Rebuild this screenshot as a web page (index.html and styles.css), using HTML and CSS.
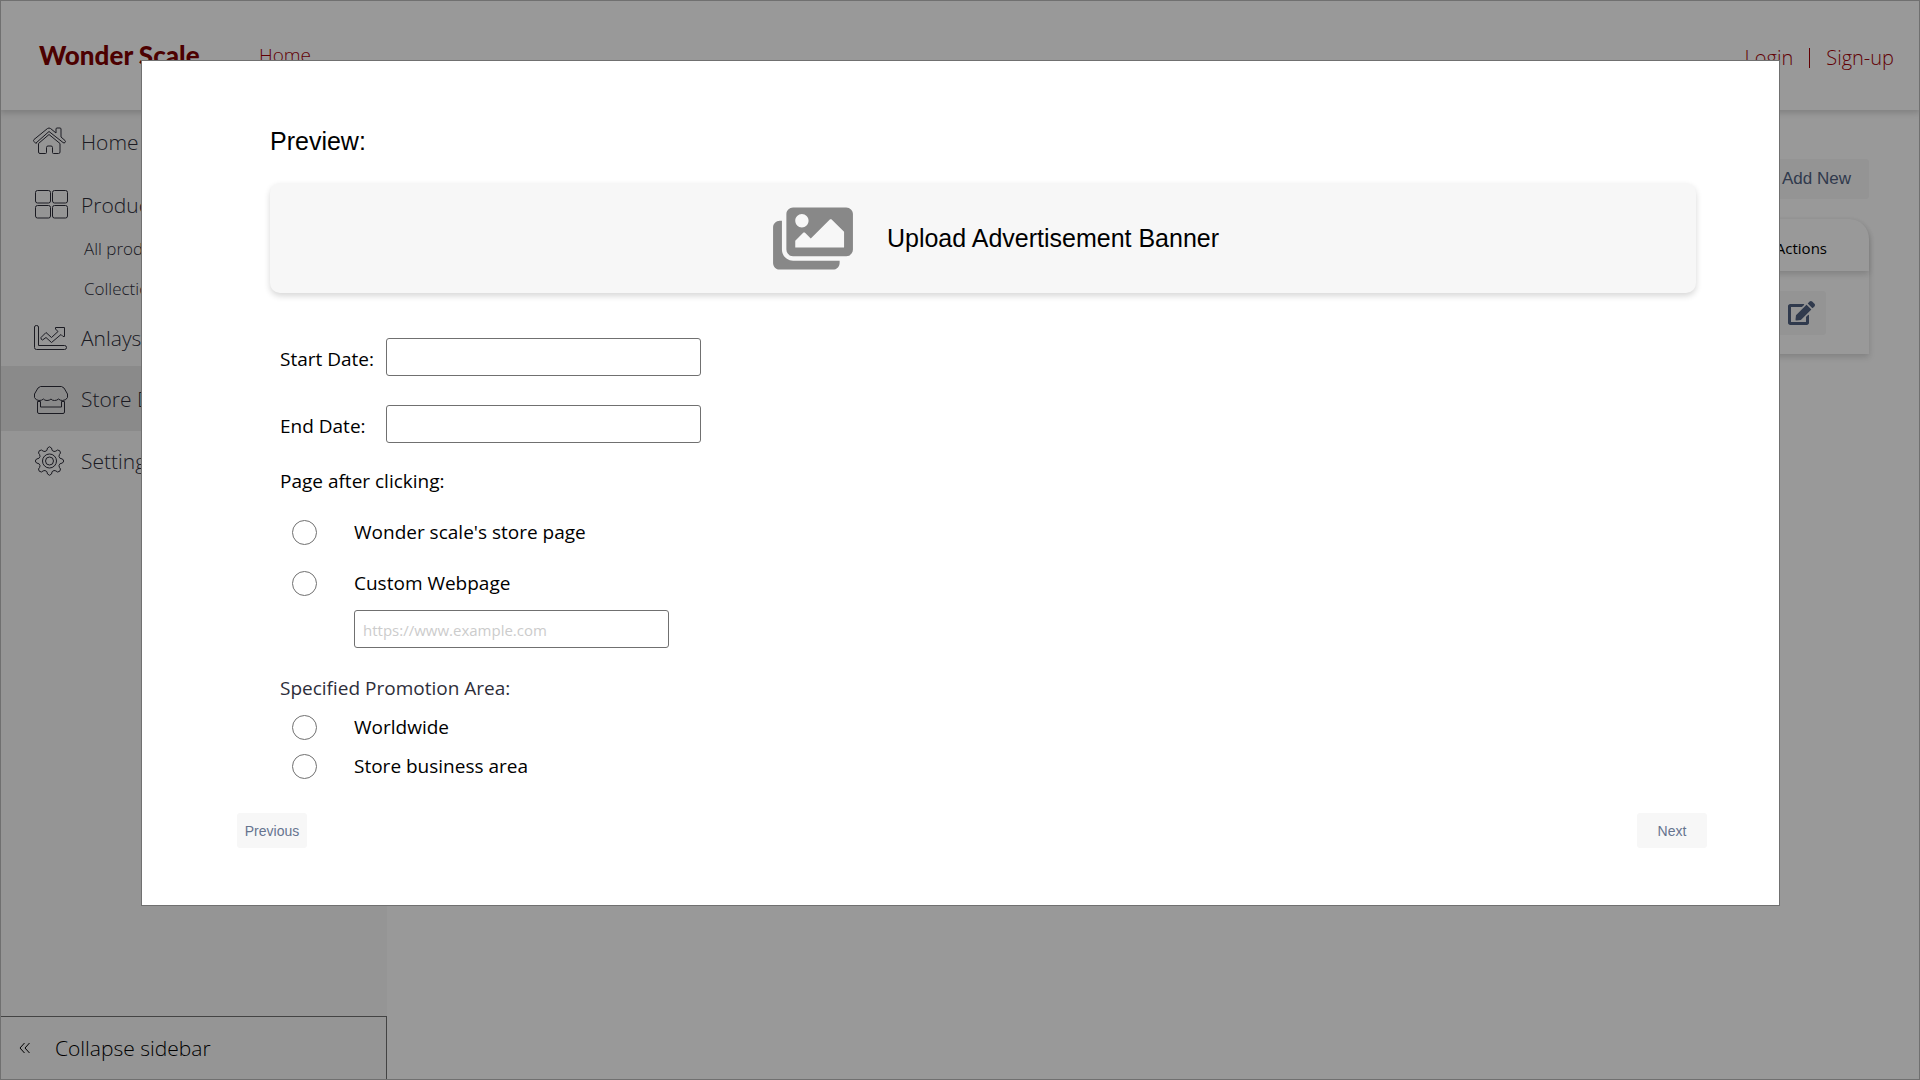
FILE: index.html
```html
<!DOCTYPE html>
<html lang="en">
<head>
<meta charset="utf-8">
<title>Wonder Scale</title>
<link rel="stylesheet" href="styles.css">
</head>
<body>
<div class="page">
  <header class="topbar">
    <a class="brand" href="#">Wonder Scale</a>
    <a class="toplink" href="#">Home</a>
    <div class="account">
      <a class="toplink" href="#">Login</a>
      <span class="divider"></span>
      <a class="toplink" href="#">Sign-up</a>
    </div>
  </header>
  <div class="body">
    <aside class="sidebar">
      <nav class="nav">
        <a class="navlink" href="#">
          <svg class="navicon" viewBox="0 0 36 32"><path d="M4 17.500L2 15.500Q1 14.500 2 13.500L15.500 2.500Q17 1.500 18.500 2.500L24 7V3Q24 2 25 2H28Q29 2 29 3V11L33 14.500Q34 15.500 33 16.500Q32 17.500 31 16.500L17 5.500L4 17Z M6.500 17.500L17 8.500L28 17.500V26Q28 27.500 26.500 27.500H21.500Q20.500 27.500 20.500 26.500V21.500Q20.500 20 19 20H16Q14.500 20 14.500 21.500V26.500Q14.500 27.500 13.500 27.500H8Q6.500 27.500 6.500 26Z"/></svg>
          <span>Home</span></a>
        <a class="navlink navlink-parent" href="#">
          <svg class="navicon" viewBox="0 0 36 32"><rect x="3.500" y="1.500" width="15" height="12.500" rx="2"/><rect x="20.500" y="1.500" width="15" height="12.500" rx="2"/><rect x="3.500" y="16.500" width="15" height="12.500" rx="2"/><rect x="20.500" y="16.500" width="15" height="12.500" rx="2"/></svg>
          <span>Products</span></a>
        <a class="sublink" href="#">All products</a>
        <a class="sublink" href="#">Collections</a>
        <a class="navlink" href="#">
          <svg class="navicon" viewBox="0 0 36 32"><path d="M2.500 5Q2.500 3.500 4.500 3.500T6.500 5V23.500H32.500Q34.500 23.500 34.500 25.500T32.500 27.500H4.500Q2.500 27.500 2.500 25.500Z M9 15.500L14 10.500L19.500 15.500L26 9.500L23.500 7V5.500H32.500V14.500H31L29 12.500L19.500 20.500L14 15.500L10.500 18Q8.500 17.500 9 15.500Z"/></svg>
          <span>Anlaysis</span></a>
        <a class="navlink navlink-current" href="#">
          <svg class="navicon" viewBox="0 0 36 32"><path d="M8.500 3.500H29.500L32 5L35.500 11V14.500Q34 17.500 30.500 17.500Q28 17.500 26.500 16Q25 17.500 22.500 17.500Q20 17.500 19 16Q17.500 17.500 15 17.500Q12.500 17.500 11.500 16Q10 17.500 7 17.500Q4 17.500 2.500 14.500V11L6 5Z M5.500 18.500H8.500V24H29.500V18.500H32.500V29Q32.500 30.500 31 30.500H7Q5.500 30.500 5.500 29Z"/></svg>
          <span>Store Display</span></a>
        <a class="navlink" href="#">
          <svg class="navicon" viewBox="0 0 36 32"><path stroke-linejoin="round" d="M15.500 3Q17.500 0.500 19.500 3Q19.500 6 22 6.500Q24 6.500 25.500 5Q28.500 5 28.500 8Q27 9.500 27 11.500Q27.500 14 30.500 14Q33 16 30.500 18Q27.500 18 27 20.500Q27 22.500 28.500 24Q28.500 27 25.500 27Q24 25.500 22 25.500Q19.500 26 19.500 29Q17.500 31.500 15.500 29Q15.500 26 13 25.500Q11 25.500 9.500 27Q6.500 27 6.500 24Q8 22.500 8 20.500Q7.500 18 4.500 18Q2 16 4.500 14Q7.500 14 8 11.500Q8 9.500 6.500 8Q6.500 5 9.500 5Q11 6.500 13 6.500Q15.500 6 15.500 3Z"/><circle cx="17.500" cy="16" r="7"/><circle cx="17.500" cy="16" r="4"/></svg>
          <span>Settings</span></a>
      </nav>
      <button class="collapse" type="button">
        <svg class="chevrons" viewBox="0 0 12 12"><path d="M5.500 1L1 6L5.500 11M10.500 1L6 6L10.500 11"/></svg>
        <span>Collapse sidebar</span>
      </button>
    </aside>
    <main class="main">
      <button class="btn btn-add" type="button">Add New</button>
      <table class="list">
        <thead><tr><th>Actions</th></tr></thead>
        <tbody><tr><td>
          <button class="btn btn-edit" type="button" aria-label="Edit"><svg viewBox="0 0 576 512"><path d="M402.600 83.200l90.200 90.200c3.800 3.800 3.800 10 0 13.800L274.400 405.600l-92.800 10.300c-12.400 1.400-22.900-9.100-21.500-21.500l10.300-92.800L388.800 83.200c3.800-3.800 10-3.800 13.800 0zm162-22.900l-48.800-48.800c-15.200-15.200-39.900-15.200-55.200 0l-35.400 35.400c-3.800 3.800-3.800 10 0 13.800l90.200 90.200c3.800 3.800 10 3.800 13.800 0l35.400-35.400c15.200-15.300 15.200-40 0-55.200zM384 346.200V448H64V128h229.800c3.200 0 6.200-1.300 8.500-3.500l40-40c7.600-7.600 2.200-20.500-8.500-20.500H48C21.500 64 0 85.500 0 112v352c0 26.500 21.500 48 48 48h352c26.500 0 48-21.500 48-48V306.200c0-10.700-12.900-16-20.500-8.500l-40 40c-2.200 2.300-3.500 5.300-3.500 8.500z"/></svg></button>
        </td></tr></tbody>
      </table>
    </main>
  </div>
</div>

<div class="overlay">
  <form class="dialog" role="dialog" aria-label="Advertisement">
    <section class="preview">
      <h2 class="title">Preview:</h2>
      <button class="banner" type="button">
        <svg viewBox="0 0 576 512"><path d="M480 416v16c0 26.510-21.490 48-48 48H48c-26.510 0-48-21.490-48-48V176c0-26.510 21.490-48 48-48h16v208c0 44.112 35.888 80 80 80h336zm96-80V80c0-26.510-21.490-48-48-48H144c-26.510 0-48 21.490-48 48v256c0 26.510 21.490 48 48 48h384c26.510 0 48-21.490 48-48zM256 128c0 26.510-21.490 48-48 48s-48-21.490-48-48 21.490-48 48-48 48 21.490 48 48zm-96 144l55.515-55.515c4.686-4.686 12.284-4.686 16.971 0L272 256l135.515-135.515c4.686-4.686 12.284-4.686 16.971 0L512 208v112H160v-48z"/></svg>
        <span>Upload Advertisement Banner</span>
      </button>
    </section>
    <div class="fields">
      <div class="daterow"><label for="start">Start Date:</label><input class="textbox" id="start" type="text"></div>
      <div class="daterow"><label for="end">End Date:</label><input class="textbox" id="end" type="text"></div>
      <fieldset class="group group-page">
        <legend>Page after clicking:</legend>
        <label class="choice"><input type="radio" name="page"><span>Wonder scale's store page</span></label>
        <label class="choice"><input type="radio" name="page"><span>Custom Webpage</span></label>
        <input class="textbox textbox-url" type="text" placeholder="https://www.example.com" aria-label="Custom webpage address">
      </fieldset>
      <fieldset class="group group-area">
        <legend>Specified Promotion Area:</legend>
        <label class="choice"><input type="radio" name="area"><span>Worldwide</span></label>
        <label class="choice"><input type="radio" name="area"><span>Store business area</span></label>
      </fieldset>
    </div>
    <div class="actions">
      <button class="btn btn-step" type="button">Previous</button>
      <button class="btn btn-step" type="button">Next</button>
    </div>
  </form>
</div>
</body>
</html>
```
FILE: styles.css
```css
* { box-sizing: border-box; }

body {
  margin: 0;
  background: #fff;
  color: #000;
  font-family: "Open Sans", "Noto Sans", sans-serif;
}

a { color: inherit; text-decoration: none; }
button { border: 0; font-family: inherit; }

.page { display: flex; flex-direction: column; min-height: 100vh; }

/* Top bar */
.topbar {
  position: relative;
  display: flex;
  align-items: center;
  height: 110px;
  padding: 0 26px 0 39px;
  background: #fff;
  color: #a40006;
  box-shadow: 0 3px 6px rgba(0, 0, 0, .16);
}
.brand {
  width: 220px;
  color: #800000;
  font: 900 26px/30px Lato, sans-serif;
}
.toplink { font-size: 19px; font-weight: 300; line-height: 28px; }
.account { display: flex; align-items: center; gap: 16px; margin-left: auto; padding-top: 5px; }
.account .toplink { font-size: 20px; }
.divider { width: 1px; height: 20px; background: #a40006; }

/* Sidebar */
.body { display: flex; flex: 1; }
.sidebar {
  display: flex;
  flex-direction: column;
  width: 387px;
  background: #f8f8f8;
}
.nav { display: flex; flex-direction: column; padding-top: 8px; }
.navlink {
  display: flex;
  align-items: center;
  gap: 13px;
  height: 48px;
  padding-left: 32px;
  color: #2e2e3a;
  font-size: 21px;
  font-weight: 300;
}
.navlink-parent { margin-top: 15px; }
.navicon { width: 36px; height: 32px; fill: none; stroke: #2e2e3a; stroke-width: 1; }
.sublink {
  height: 40px;
  padding-left: 84px;
  color: #2e2e3a;
  font-size: 17px;
  font-weight: 300;
  line-height: 40px;
}
.sublink + .navlink { margin-top: 5px; }
.navlink-current { height: 65px; margin: 4px 0 6px; background: #e6e6e6; }
.collapse {
  display: flex;
  align-items: center;
  gap: 24px;
  height: 64px;
  margin-top: auto;
  padding: 0 18px;
  border: 1px solid #707070;
  background: #f8f8f8;
  color: #000;
  font-size: 21px;
  font-weight: 300;
}
.chevrons { width: 12px; height: 12px; fill: none; stroke: #000; }

/* Main area */
.main {
  display: flex;
  flex: 1;
  flex-direction: column;
  align-items: flex-end;
  gap: 20px;
  padding: 49px 51px 0;
}
.btn {
  border-radius: 3px;
  background: #f7f7f7;
  color: #506180;
  font-family: "Liberation Sans", Arial, sans-serif;
}
.btn-add { height: 40px; padding: 0 18px; font-size: 17px; }
.list {
  width: 100%;
  border-collapse: separate;
  border-spacing: 0;
  border-radius: 20px 20px 0 0;
  box-shadow: 0 3px 6px rgba(0, 0, 0, .16);
}
.list th {
  height: 52px;
  padding: 6px 42px 0 0;
  border-radius: 20px 20px 0 0;
  box-shadow: 0 3px 6px rgba(0, 0, 0, .16);
  font-size: 15px;
  font-weight: 400;
  text-align: right;
}
.list td { height: 83px; padding: 0 43px 0 0; text-align: right; }
.btn-edit { height: 44px; padding: 0 11px; vertical-align: middle; }
.btn-edit svg { display: block; width: 27px; height: 24px; fill: #506180; }

/* Dialog */
.overlay {
  position: fixed;
  inset: 0;
  padding: 59px 139px 0 140px;
  border: 1px solid #707070;
  background: rgba(0, 0, 0, .4);
}
.dialog {
  padding: 64px 72px 57px 95px;
  border: 1px solid #707070;
  background: #fff;
}
.preview { padding: 0 11px 0 33px; }
.title {
  margin: 0 0 26px;
  font: 400 25px/32px "Liberation Sans", Arial, sans-serif;
}
.banner {
  display: flex;
  align-items: center;
  justify-content: center;
  gap: 34px;
  width: 100%;
  height: 110px;
  padding: 0 0 0 26px;
  border-radius: 10px;
  background: #f7f7f7;
  box-shadow: 0 3px 6px rgba(0, 0, 0, .16);
  color: #000;
  font: 400 25px/32px "Liberation Sans", Arial, sans-serif;
}
.banner svg { width: 80px; height: 71px; fill: #888; }

.fields {
  padding: 45px 0 0 43px;
  font-size: 19px;
  line-height: 28px;
}
.daterow { display: flex; align-items: center; margin-bottom: 29px; }
.daterow label { width: 106px; padding-top: 3px; }
.textbox {
  width: 315px;
  height: 38px;
  padding: 2px 8px 0;
  border: 1px solid #707070;
  border-radius: 3px;
  background: #fff;
  font: 400 15px/20px "Open Sans", "Noto Sans", sans-serif;
}
.textbox::placeholder { color: #ccc; opacity: 1; }
.group { display: flex; flex-direction: column; margin: 0; padding: 0; border: 0; }
.group legend { padding: 0; }
.group-page { margin-top: -5px; }
.group-page .choice { margin-top: 23px; }
.textbox-url { margin: 13px 0 0 74px; }
.group-area { margin-top: 26px; }
.group-area legend { color: #2e2e3a; }
.group-area .choice { margin-top: 11px; }
.choice { display: flex; align-items: center; gap: 37px; height: 28px; padding-left: 12px; }
.choice input {
  appearance: none;
  width: 25px;
  height: 25px;
  margin: 0;
  border: 1px solid #707070;
  border-radius: 50%;
  background: #fff;
}
.actions { display: flex; justify-content: space-between; margin-top: 33px; }
.btn-step { width: 70px; height: 35px; padding: 0; color: #66748f; font-size: 14px; }
```
